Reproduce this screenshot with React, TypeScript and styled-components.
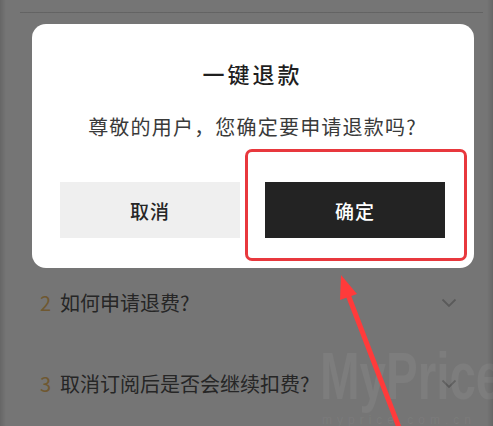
import React from "react";
import styled, { createGlobalStyle } from "styled-components";

const GlobalStyle = createGlobalStyle`
  html, body {
    margin: 0;
    padding: 0;
    background: #ffffff;
  }
  body {
    font-family: "Noto Sans CJK SC", "Noto Sans", sans-serif;
  }
`;

const Page = styled.div`
  position: relative;
  width: 493px;
  height: 426px;
  overflow: hidden;
  background: #ffffff;
`;

const TopDivider = styled.div`
  height: 1px;
  margin: 12px 10px 0 20px;
  background: #d8d8d8;
`;

const FaqList = styled.ul`
  list-style: none;
  margin: 0;
  padding: 249px 0 0 0;
`;

const FaqItem = styled.li`
  height: 81px;
  display: flex;
  align-items: center;
  padding: 0 36px 0 40px;
`;

const FaqIndex = styled.span`
  font-size: 20px;
  color: #f2c06a;
  width: 20px;
  flex-shrink: 0;
`;

const FaqText = styled.span`
  flex: 1;
  font-size: 20px;
  color: #525252;
`;

const Chevron = styled.svg`
  width: 16px;
  height: 10px;
  flex-shrink: 0;
`;

const Overlay = styled.div`
  position: absolute;
  inset: 0;
  background: linear-gradient(
    to right,
    rgba(0, 0, 0, 0.6) 0,
    rgba(0, 0, 0, 0.54) 6px,
    rgba(0, 0, 0, 0.54) calc(100% - 6px),
    rgba(0, 0, 0, 0.6) 100%
  );
  padding: 24px 19px 0 32px;
`;

const Dialog = styled.div`
  position: relative;
  width: 442px;
  box-sizing: border-box;
  background: #ffffff;
  border-radius: 14px;
  padding: 36px 29px 30px 28px;
  text-align: center;
`;

const Title = styled.h2`
  margin: 0;
  font-size: 22px;
  line-height: 26px;
  letter-spacing: 3px;
  font-weight: 500;
  color: #1f1f1f;
`;

const Message = styled.p`
  margin: 28px 0 0;
  font-size: 20px;
  line-height: 26px;
  letter-spacing: 1.2px;
  color: #3a3a3a;
`;

const Actions = styled.div`
  display: flex;
  gap: 25px;
  margin-top: 42px;
`;

const ActionButton = styled.button<{ $primary?: boolean }>`
  width: 180px;
  height: 56px;
  border: none;
  border-radius: 0;
  font-family: inherit;
  font-size: 19px;
  font-weight: 500;
  letter-spacing: 1px;
  background: ${(p) => (p.$primary ? "#232323" : "#efefef")};
  color: ${(p) => (p.$primary ? "#ffffff" : "#262626")};
`;

const Highlight = styled.div`
  position: absolute;
  left: 213px;
  top: 125px;
  width: 222px;
  height: 112px;
  box-sizing: border-box;
  border: 3px solid #e8383d;
  border-radius: 7px;
  pointer-events: none;
`;

const ArrowLayer = styled.svg`
  position: absolute;
  left: 0;
  top: 0;
  width: 493px;
  height: 426px;
  pointer-events: none;
`;

const Watermark = styled.div`
  position: absolute;
  left: 320px;
  top: 338px;
  pointer-events: none;
  color: rgba(255, 255, 255, 0.06);
  font-family: "Liberation Sans", Arial, sans-serif;
`;

const WatermarkLogo = styled.div`
  font-size: 66px;
  font-weight: 700;
  line-height: 76px;
  transform: scaleX(0.72);
  transform-origin: left top;
  white-space: nowrap;
`;

const WatermarkUrl = styled.div`
  font-size: 12px;
  line-height: 12px;
  letter-spacing: 5px;
  white-space: nowrap;
  margin-left: 2px;
`;

const faqs = [
  { n: 2, text: "如何申请退费?" },
  { n: 3, text: "取消订阅后是否会继续扣费?" },
];

export default function App() {
  return (
    <Page>
      <GlobalStyle />
      <TopDivider />
      <FaqList>
        {faqs.map((f) => (
          <FaqItem key={f.n}>
            <FaqIndex>{f.n}</FaqIndex>
            <FaqText>{f.text}</FaqText>
            <Chevron viewBox="0 0 16 10">
              <path d="M1.5 1.5 L8 8 L14.5 1.5" fill="none" stroke="#c4c4c4" strokeWidth="1.8" />
            </Chevron>
          </FaqItem>
        ))}
      </FaqList>

      <Overlay>
        <Dialog>
          <Title>一键退款</Title>
          <Message>尊敬的用户，您确定要申请退款吗?</Message>
          <Actions>
            <ActionButton>取消</ActionButton>
            <ActionButton $primary>确定</ActionButton>
          </Actions>
          <Highlight />
        </Dialog>
      </Overlay>

      <Watermark>
        <WatermarkLogo>MyPrice</WatermarkLogo>
        <WatermarkUrl>myprice.com.cn</WatermarkUrl>
      </Watermark>

      <ArrowLayer viewBox="0 0 493 426">
        <path d="M400 430 L347 292" stroke="#ff3b3b" strokeWidth="5" strokeLinecap="round" fill="none" />
        <path d="M341 275 L357 294 L340 300 Z" fill="#ff3b3b" />
      </ArrowLayer>
    </Page>
  );
}
